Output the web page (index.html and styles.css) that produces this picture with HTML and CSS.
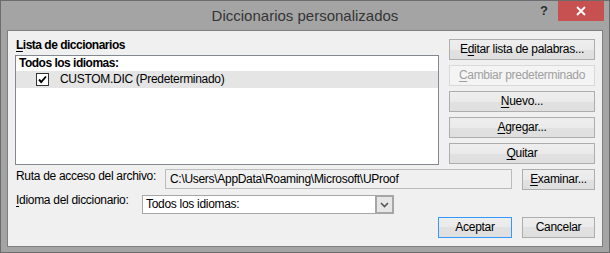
FILE: index.html
```html
<!DOCTYPE html>
<html lang="es">
<head>
	<meta charset="UTF-8">
	<title>Diccionarios personalizados</title>
	<link rel="stylesheet" href="styles.css">
</head>
<body>
	<div class="window">
		<div class="titlebar">
			<span></span>
			<span class="title">Diccionarios personalizados</span>
			<div class="caption">
				<span class="help">?</span>
				<span class="close">
					<svg width="10" height="10" viewBox="0 0 10 10"><path d="M1 1L9 9M9 1L1 9" stroke="#fff" stroke-width="1.8" fill="none"/></svg>
				</span>
			</div>
		</div>
		<div class="client">
			<div class="top">
				<div class="list-col">
					<div class="group-label"><u>L</u>ista de diccionarios</div>
					<div class="listbox">
						<div class="list-head">Todos los idiomas:</div>
						<div class="list-row">
							<span class="check">
								<svg width="13" height="13" viewBox="0 0 13 13"><rect x="0.5" y="0.5" width="12" height="12" fill="#fff" stroke="#333"/><path d="M3 6.5L5.2 9L10 3.5" stroke="#000" stroke-width="1.9" fill="none"/></svg>
							</span>
							<span>CUSTOM.DIC (Predeterminado)</span>
						</div>
					</div>
				</div>
				<div class="side-btns">
					<button class="btn">E<u>d</u>itar lista de palabras...</button>
					<button class="btn" disabled><u>C</u>ambiar predeterminado</button>
					<button class="btn"><u>N</u>uevo...</button>
					<button class="btn"><u>A</u>gregar...</button>
					<button class="btn"><u>Q</u>uitar</button>
				</div>
			</div>
			<div class="row path-row">
				<label class="path-label">Ruta de acceso del archivo:</label>
				<div class="textbox">C:\Users\AppData\Roaming\Microsoft\UProof</div>
				<button class="btn small"><u>E</u>xaminar...</button>
			</div>
			<div class="row lang-row">
				<label class="lang-label"><u>I</u>dioma del diccionario:</label>
				<div class="combo">
					<span class="combo-text">Todos los idiomas:</span>
					<span class="combo-arrow">
						<svg width="9" height="6" viewBox="0 0 9 6"><path d="M1 1L4.5 4.5L8 1" stroke="#555" stroke-width="1.6" fill="none"/></svg>
					</span>
				</div>
			</div>
			<div class="row footer">
				<button class="btn small default">Aceptar</button>
				<button class="btn small">Cancelar</button>
			</div>
		</div>
	</div>
</body>
</html>
```

FILE: styles.css
```css
*{margin:0;padding:0;box-sizing:border-box;}
body{margin:0;font-family:"Segoe UI","Liberation Sans",Arial,sans-serif;font-size:12px;letter-spacing:-0.3px;color:#000;background:#fff;}
u{text-decoration:underline;text-underline-offset:2px;}

.window{width:610px;height:253px;background:#a4a4a4;border:1px solid #6c6c6c;display:flex;flex-direction:column;}
.titlebar{height:29px;display:grid;grid-template-columns:1fr auto 1fr;align-items:start;}
.title{font-size:15px;letter-spacing:0;color:#353535;line-height:20px;padding-top:5px;}
.caption{display:flex;justify-content:flex-end;align-items:flex-start;padding-right:5px;}
.help{font-weight:bold;font-size:13px;letter-spacing:0;color:#303030;line-height:20px;margin-right:10px;}
.close{width:46px;height:20px;background:#c75050;display:flex;align-items:center;justify-content:center;}
.close svg{display:block;}

.client{flex:1;margin:0 6px 5px;background:#f0f0f0;border:1px solid #7e7e7e;padding:6px 7px 0;}

.top{display:flex;gap:10px;}
.list-col{width:424px;}
.group-label{font-weight:bold;letter-spacing:-0.5px;line-height:16px;padding-left:1px;}
.listbox{margin-top:2px;height:110px;background:#fff;border:1px solid #828790;}
.list-head{font-weight:bold;letter-spacing:-0.5px;line-height:15px;padding-left:3px;}
.list-row{height:17px;margin-top:0;background:#e5e5e5;display:flex;align-items:center;padding-left:20px;line-height:17px;}
.check{width:13px;height:13px;margin-right:11px;}
.check svg{display:block;}

.side-btns{width:146px;margin-top:2px;display:flex;flex-direction:column;gap:5px;}
.btn{height:21px;font:inherit;letter-spacing:inherit;color:#000;border:1px solid #adadad;background:linear-gradient(#eeeeee 0%,#eaeaea 50%,#e1e1e1 50%,#dfdfdf 100%);line-height:19px;text-align:center;}
.btn:disabled{color:#a0a0a0;border-color:#d9d9d9;background:#f4f4f4;}
.btn.small{width:73px;}
.btn.default{width:74px;border-color:#3399ff;}

.row{display:flex;align-items:flex-start;}
.path-row{margin-top:4px;}
.path-label{width:150px;line-height:16px;margin-top:-1px;padding-left:1px;}
.textbox{width:347px;height:20px;background:#f0f0f0;border:1px solid #bcbcbc;line-height:18px;padding-left:4px;margin-right:10px;}

.lang-row{margin-top:5px;}
.lang-label{width:127px;line-height:16px;margin-top:-3px;padding-left:1px;}
.combo{width:252px;height:19px;background:#fff;border:1px solid #a6a6a6;display:flex;}
.combo-text{flex:1;line-height:17px;padding-left:3px;}
.combo-arrow{width:19px;height:19px;margin:-1px -1px 0 0;background:#e6e6e6;border:2px solid #a6a6a6;display:flex;align-items:center;justify-content:center;}
.combo-arrow svg{display:block;}

.footer{margin-top:3px;justify-content:flex-end;gap:10px;}
```
